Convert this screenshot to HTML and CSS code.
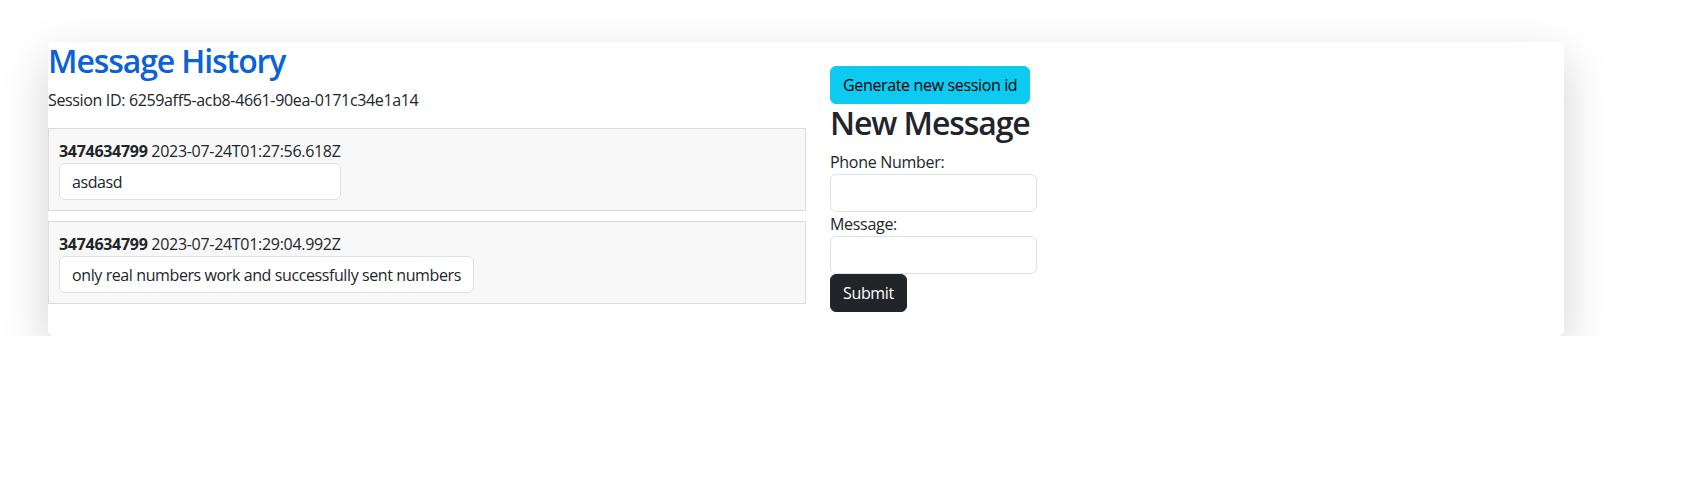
FILE: index.html
```html
<!DOCTYPE html>
<html lang="en">
<head>
<meta charset="utf-8">
<title>Messages</title>
<link rel="stylesheet" href="styles.css">
</head>
<body>
<div class="page">
  <div class="card">
    <section class="history">
      <h2 class="title">Message History</h2>
      <p class="session">Session ID: 6259aff5-acb8-4661-90ea-0171c34e1a14</p>
      <div class="msg">
        <div class="msg-inner">
          <div class="msg-head"><strong>3474634799</strong> 2023-07-24T01:27:56.618Z</div>
          <div class="bubble">asdasd</div>
        </div>
      </div>
      <div class="msg">
        <div class="msg-inner">
          <div class="msg-head"><strong>3474634799</strong> 2023-07-24T01:29:04.992Z</div>
          <div class="bubble">only real numbers work and successfully sent numbers</div>
        </div>
      </div>
    </section>
    <section class="compose">
      <button class="btn btn-info" type="button">Generate new session id</button>
      <h2 class="heading">New Message</h2>
      <form class="form">
        <label class="label" for="phone">Phone Number:</label>
        <input class="field" id="phone" type="text">
        <label class="label" for="message">Message:</label>
        <input class="field" id="message" type="text">
        <button class="btn btn-dark" type="button">Submit</button>
      </form>
    </section>
  </div>
</div>
</body>
</html>
```
FILE: styles.css
```css
* { box-sizing: border-box; }
html, body { margin: 0; padding: 0; background: #fff; }
body {
  font-family: "Open Sans", "Noto Sans", sans-serif;
  font-size: 16px;
  line-height: 24px;
  letter-spacing: -0.3px;
  color: #212529;
}
.page { padding: 42px 0 0 48px; }
.card {
  width: 1516px;
  display: grid;
  grid-template-columns: 1fr 1fr;
  background: #fff;
  border-radius: 6px;
  box-shadow: 0 16px 48px rgba(0, 0, 0, 0.175);
}
.history { min-width: 0; }
.title, .heading {
  margin: 0 0 8px;
  font-size: 32px;
  line-height: 38.4px;
  font-weight: 600;
  letter-spacing: -1.1px;
}
.title { color: #0b62d6; }
.session { margin: 0 0 16px; letter-spacing: -0.35px; }
.msg {
  background: #f8f8f8;
  border: 1px solid #dcdcdc;
  padding: 10px;
  margin-bottom: 10px;
}
.msg-inner { display: inline-block; }
.msg-head strong { font-weight: 700; }
.bubble {
  background: #fff;
  border: 1px solid #dee2e6;
  border-radius: 6px;
  padding: 5.5px 12px;
  letter-spacing: -0.4px;
}
.compose { padding: 24px; }
.btn {
  display: inline-block;
  font-family: inherit;
  font-size: 16px;
  line-height: 24px;
  letter-spacing: -0.35px;
  padding: 6px 12px;
  border: 1px solid transparent;
  border-radius: 6px;
  cursor: pointer;
}
.btn-info { background: #0dcaf0; border-color: #0dcaf0; color: #000; }
.btn-dark { background: #212529; border-color: #212529; color: #fff; }
.form { display: flex; flex-direction: column; align-items: flex-start; }
.label { display: block; }
.field {
  width: 207px;
  height: 38px;
  border: 1px solid #dee2e6;
  border-radius: 6px;
  padding: 6px 12px;
  font-family: inherit;
  font-size: 16px;
  background: #fff;
}
```
